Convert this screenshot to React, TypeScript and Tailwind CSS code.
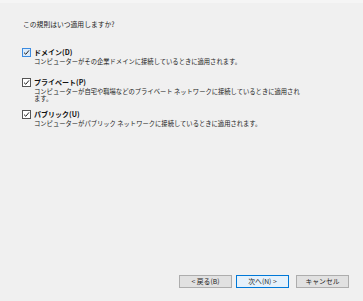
import React from "react";

const font = { fontFamily: '"Noto Sans CJK JP", "Noto Sans", sans-serif' };

function Check({ active }: { active?: boolean }) {
  return (
    <div
      className={
        "w-[9px] h-[9px] border flex items-center justify-center shrink-0 " +
        (active ? "border-[#3c8be0] bg-[#dcecfc]" : "border-[#555] bg-white")
      }
    >
      <svg width="7" height="7" viewBox="0 0 7 7">
        <path d="M1 3.6 L2.8 5.3 L6 1.4" fill="none" stroke="#222" strokeWidth="1" />
      </svg>
    </div>
  );
}

function Item({
  label,
  desc,
  active,
  className,
}: {
  label: string;
  desc: React.ReactNode;
  active?: boolean;
  className?: string;
}) {
  return (
    <div className={"flex gap-[3px] " + (className ?? "")}>
      <div>
        <Check active={active} />
      </div>
      <div className="flex flex-col">
        <div className="text-[7px] leading-[9px] font-bold text-[#111]">{label}</div>
        <div className="text-[6.3px] leading-[7.5px] text-[#222] mt-[1px]">{desc}</div>
      </div>
    </div>
  );
}

export default function App() {
  return (
    <div className="w-[363px] h-[301px] bg-[#f0f0f0] relative overflow-hidden" style={font}>
      <div className="h-[3px] bg-[#f5f5f5]" />
      <div className="pl-[23px] pt-[17px] text-[6.8px] leading-[9px] text-[#222]">
        この規則はいつ適用しますか?
      </div>
      <div className="pl-[22px] flex flex-col">
        <Item
          className="mt-[19px]"
          active
          label="ドメイン(D)"
          desc="コンピューターがその企業ドメインに接続しているときに適用されます。"
        />
        <Item
          className="mt-[12px]"
          label="プライベート(P)"
          desc={
            <>
              コンピューターが自宅や職場などのプライベート ネットワークに接続しているときに適用され
              <br />
              ます。
            </>
          }
        />
        <Item
          className="mt-[7px]"
          label="パブリック(U)"
          desc="コンピューターがパブリック ネットワークに接続しているときに適用されます。"
        />
      </div>
      <div className="absolute left-0 right-0 top-[275px] flex pl-[179px] text-[6.8px] text-[#222]">
        <button className="w-[53px] h-[13px] border border-[#adadad] bg-[#e1e1e1] flex items-center justify-center leading-none">
          &lt; 戻る(B)
        </button>
        <button className="ml-[4px] w-[53px] h-[13px] border border-[#0078d7] bg-[#e5f1fb] flex items-center justify-center leading-none">
          次へ(N) &gt;
        </button>
        <button className="ml-[7px] w-[53px] h-[13px] border border-[#adadad] bg-[#e1e1e1] flex items-center justify-center leading-none">
          キャンセル
        </button>
      </div>
    </div>
  );
}
